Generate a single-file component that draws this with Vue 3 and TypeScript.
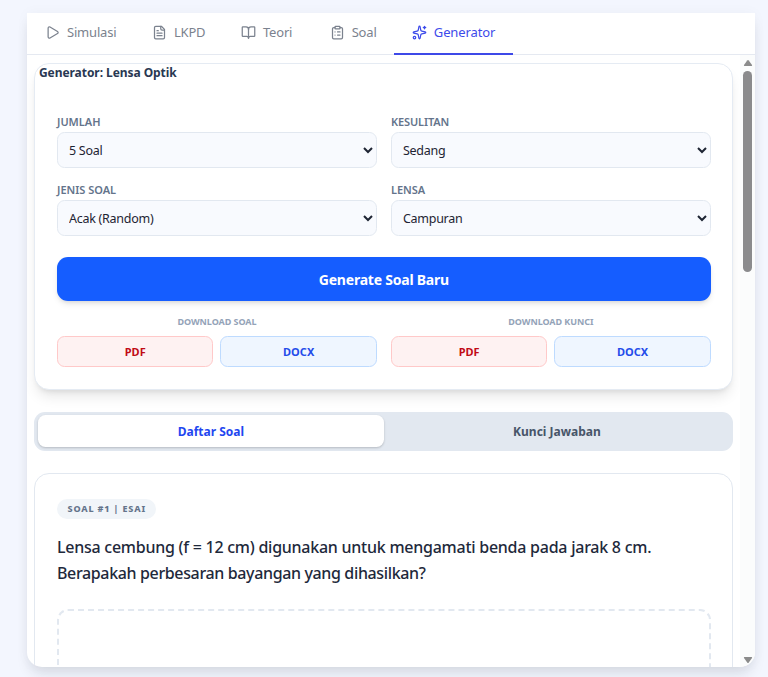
<script setup lang="ts">
import { ref } from 'vue'

interface Tab { id: string; label: string; paths: string[] }
interface Field { id: string; label: string; value: string }

const tabs: Tab[] = [
  { id: 'simulasi', label: 'Simulasi', paths: ['M5 5a2 2 0 0 1 3.008-1.728l11.997 6.998a2 2 0 0 1 .003 3.458l-12 7A2 2 0 0 1 5 19z'] },
  { id: 'lkpd', label: 'LKPD', paths: ['M15 2H6a2 2 0 0 0-2 2v16a2 2 0 0 0 2 2h12a2 2 0 0 0 2-2V7Z', 'M14 2v4a2 2 0 0 0 2 2h4', 'M10 9H8', 'M16 13H8', 'M16 17H8'] },
  { id: 'teori', label: 'Teori', paths: ['M12 7v14', 'M3 18a1 1 0 0 1-1-1V4a1 1 0 0 1 1-1h5a4 4 0 0 1 4 4 4 4 0 0 1 4-4h5a1 1 0 0 1 1 1v13a1 1 0 0 1-1 1h-6a3 3 0 0 0-3 3 3 3 0 0 0-3-3z'] },
  { id: 'soal', label: 'Soal', paths: ['M9 2h6a1 1 0 0 1 1 1v2a1 1 0 0 1-1 1H9a1 1 0 0 1-1-1V3a1 1 0 0 1 1-1z', 'M16 4h2a2 2 0 0 1 2 2v14a2 2 0 0 1-2 2H6a2 2 0 0 1-2-2V6a2 2 0 0 1 2-2h2', 'M12 11h4', 'M12 16h4', 'M8 11h.01', 'M8 16h.01'] },
  { id: 'generator', label: 'Generator', paths: ['M11.017 2.814a1 1 0 0 1 1.966 0l1.051 5.558a2 2 0 0 0 1.594 1.594l5.558 1.051a1 1 0 0 1 0 1.966l-5.558 1.051a2 2 0 0 0-1.594 1.594l-1.051 5.558a1 1 0 0 1-1.966 0l-1.051-5.558a2 2 0 0 0-1.594-1.594l-5.558-1.051a1 1 0 0 1 0-1.966l5.558-1.051a2 2 0 0 0 1.594-1.594z', 'M20 2v4', 'M22 4h-4', 'M2 20a2 2 0 1 0 4 0a2 2 0 1 0-4 0'] },
]
const activeTab = ref('generator')

const fields: Field[] = [
  { id: 'jumlah', label: 'JUMLAH', value: '5 Soal' },
  { id: 'kesulitan', label: 'KESULITAN', value: 'Sedang' },
  { id: 'jenis', label: 'JENIS SOAL', value: 'Acak (Random)' },
  { id: 'lensa', label: 'LENSA', value: 'Campuran' },
]
const downloads = ['DOWNLOAD SOAL', 'DOWNLOAD KUNCI']
const view = ref<'soal' | 'kunci'>('soal')
</script>

<template>
  <main class="page">
    <section class="panel">
      <nav class="tabs">
        <button v-for="t in tabs" :key="t.id" :class="['tab', t.id, { active: activeTab === t.id }]" @click="activeTab = t.id">
          <svg viewBox="0 0 24 24"><path v-for="p in t.paths" :key="p" :d="p" /></svg>
          <span>{{ t.label }}</span>
        </button>
      </nav>
      <div class="body">
        <div class="content">
          <section class="card">
            <h2>Generator: Lensa Optik</h2>
            <div class="fields">
              <label v-for="f in fields" :key="f.id" :class="['field', f.id]">
                <span>{{ f.label }}</span>
                <select><option>{{ f.value }}</option></select>
              </label>
            </div>
            <button class="generate"><span>Generate Soal Baru</span></button>
            <div class="downloads">
              <div v-for="d in downloads" :key="d" class="download">
                <p>{{ d }}</p>
                <div class="formats">
                  <button class="pdf">PDF</button>
                  <button class="docx">DOCX</button>
                </div>
              </div>
            </div>
          </section>
          <div class="switch">
            <button class="daftar" :class="{ on: view === 'soal' }" @click="view = 'soal'">Daftar Soal</button>
            <button class="kunci" :class="{ on: view === 'kunci' }" @click="view = 'kunci'">Kunci Jawaban</button>
          </div>
          <article class="question">
            <span class="badge">SOAL #1 | ESAI</span>
            <p><span class="line one">Lensa cembung (f = 12 cm) digunakan untuk mengamati benda pada jarak 8 cm.</span> <span class="line two">Berapakah perbesaran bayangan yang dihasilkan?</span></p>
            <div class="answer"></div>
          </article>
        </div>
        <div class="scrollbar">
          <svg class="arrow" viewBox="0 0 10 8"><path d="M4.2 1.5Q5 .5 5.8 1.5L9 6Q9.5 7 8.5 7H1.5Q.5 7 1 6Z" /></svg>
          <div class="track"><div class="thumb"></div></div>
          <svg class="arrow" viewBox="0 0 10 8"><path d="M4.2 6.5Q5 7.5 5.8 6.5L9 2Q9.5 1 8.5 1H1.5Q.5 1 1 2Z" /></svg>
        </div>
      </div>
    </section>
  </main>
</template>

<style>
body { background: #f3f6fe; overflow: hidden; }
</style>

<style scoped>
* { box-sizing: border-box; }
.page { height: 677px; padding: 13px 13px 10px 27px; font-family: 'Noto Sans', 'Open Sans', sans-serif; color: #1e293b; background: #f3f6fe; }
button, select { font-family: inherit; margin: 0; }
button { padding: 0; border: 0; cursor: pointer; white-space: nowrap; }
.panel { display: flex; flex-direction: column; height: 654px; background: #fff; border-radius: 0 0 15px 15px; overflow: hidden; box-shadow: 0 9px 14px -3px rgb(15 23 42 / .12), 0 0 14px rgb(15 23 42 / .035); }
.tabs { display: flex; flex: none; height: 42px; border-bottom: 1px solid #e5e9f1; }
.tab { display: flex; align-items: center; gap: 7px; height: 42px; padding: 0 0 2px 18px; background: none; border-bottom: 2px solid transparent; color: #7b828e; font-size: 13px; letter-spacing: -.2px; }
.tab svg { flex: none; width: 15px; height: 15px; fill: none; stroke: currentColor; stroke-width: 2; stroke-linecap: round; stroke-linejoin: round; }
.tab.simulasi { width: 107px; }
.tab.lkpd { width: 89px; }
.tab.teori { width: 88.7px; }
.tab.soal { width: 82.1px; }
.tab.generator { width: 119.5px; letter-spacing: -.12px; }
.tab.active { color: #3d4bea; border-color: #3e49e8; }
.body { display: flex; flex: 1; min-height: 0; overflow: hidden; }
.content { flex: 1; padding: 8px 6.6px 0 7.4px; min-width: 0; }
.card { height: 326.6px; padding: 0 21.6px; background: #fff; border: 1px solid #e5ebf3; border-radius: 15px; box-shadow: 0 9px 14px -3px rgb(0 0 0 / .1), 0 4px 6px -4px rgb(0 0 0 / .12); }
h2 { margin: 0 0 0 -18px; height: 49.9px; font-size: 12px; line-height: 18.5px; font-weight: 700; letter-spacing: -.06px; color: #293852; white-space: nowrap; }
.fields { display: grid; grid-template-columns: 1fr 1fr; gap: 14px; }
.field { display: flex; flex-direction: column; height: 54px; }
.field span { height: 18.5px; font-size: 11px; line-height: 16px; font-weight: 600; color: #64748b; white-space: nowrap; }
.field span { align-self: flex-start; }
.kesulitan span { letter-spacing: -.1px; }
select { width: 100%; height: 35.5px; padding: 1px 0 0 7px; border: 1px solid #e2e8f0; border-radius: 7.5px; background: #f8fafe; color: #1e2433; font-size: 12.5px; letter-spacing: -.26px; }
.generate { display: block; width: 100%; height: 43.5px; margin-top: 21.5px; border-radius: 11px; background: #155dff; color: #fff; font-size: 14px; font-weight: 700; letter-spacing: -.22px; box-shadow: 0 4px 6px -1px rgb(0 0 0 / .1), 0 2px 4px -2px rgb(0 0 0 / .12); }
.downloads { display: grid; grid-template-columns: 1fr 1fr; gap: 14px; margin-top: 14.2px; }
.download p { margin: 0 0 7px; height: 14px; font-size: 9px; line-height: 14px; font-weight: 700; text-align: center; letter-spacing: -.05px; color: #94a3b8; }
.formats { display: grid; grid-template-columns: 1fr 1fr; gap: 7px; }
.formats button { height: 31px; border: 1px solid; border-radius: 7.5px; font-size: 11px; font-weight: 700; }
.formats .pdf { color: #c10b15; background: #fef2f2; border-color: #ffc9c9; }
.formats .docx { color: #234bea; background: #eff6ff; border-color: #bedbff; }
.switch { display: flex; height: 39.2px; margin-top: 22px; padding: 3.5px; border-radius: 11px; background: #e2e8f0; }
.switch button { flex: 1; height: 32.2px; border-radius: 7.5px; background: transparent; color: #475569; font-size: 12px; font-weight: 700; }
.switch button.on { background: #fff; color: #1f47f0; box-shadow: 0 1px 3px rgb(0 0 0 / .1), 0 1px 2px rgb(0 0 0 / .1); }
.question { height: 400px; margin-top: 22px; padding: 25px 21.6px 0; border: 1px solid #e2e8f0; border-radius: 15px; }
.badge { display: flex; align-items: center; justify-content: center; width: 99.5px; height: 20px; border-radius: 10px; background: #f1f5f9; color: #64748b; font-size: 9px; font-weight: 800; letter-spacing: .85px; white-space: nowrap; }
.question p { margin: 15px 0 0; font-size: 16px; line-height: 26.4px; font-weight: 500; }
.line { display: table; white-space: nowrap; }
.one { letter-spacing: -.25px; }
.two { letter-spacing: -.36px; }
.answer { height: 200px; margin-top: 22px; border: 2px dashed #e2e8f0; border-radius: 11px; }
.scrollbar { flex: none; display: flex; flex-direction: column; align-items: center; width: 15px; padding: 4px 0 3px; background: #fbfcfc; }
.arrow { flex: none; width: 10px; height: 8px; fill: #8b8b8b; }
.track { flex: 1; padding-top: 4px; }
.thumb { width: 8.5px; height: 201px; border-radius: 5px; background: #8b8b8d; }
</style>
